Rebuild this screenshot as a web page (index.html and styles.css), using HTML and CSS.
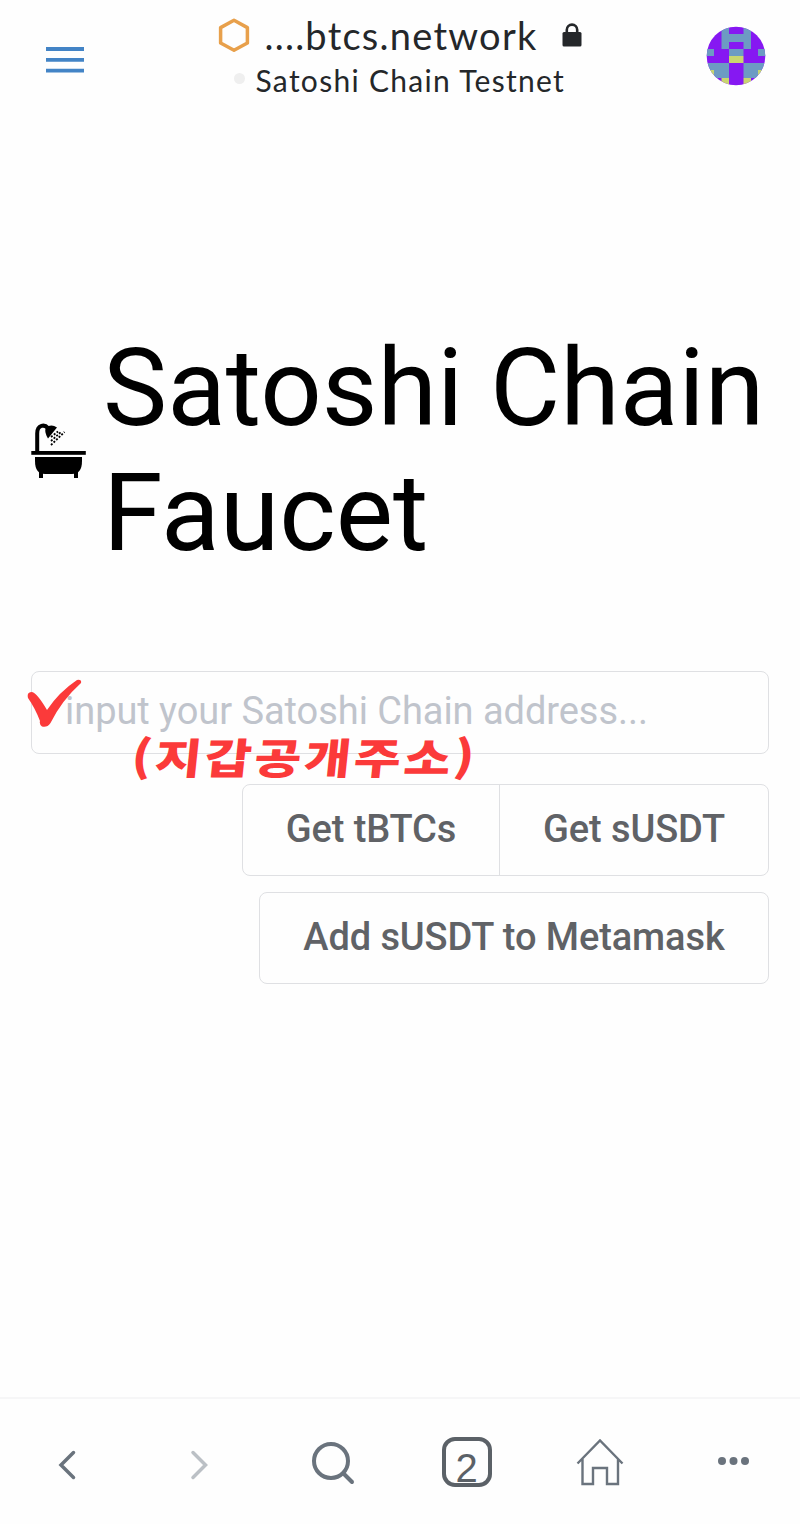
FILE: index.html
```
<!DOCTYPE html>
<html lang="en">
<head>
    <meta charset="UTF-8">
    <meta name="viewport" content="width=device-width, initial-scale=1.0">
    <title>Satoshi Chain Faucet</title>
    <link rel="stylesheet" href="styles.css">
</head>
<body>
    <header>
        <svg class="menu" viewBox="0 0 38 28" width="38" height="28">
            <path d="M0 3h38M0 13.8h38M0 24.6h38" stroke="#4384c6" stroke-width="3.8"/>
        </svg>
        <div class="site">
            <div class="site-url">
                <svg width="32" height="34" viewBox="0 0 32 34">
                    <path d="M16 2.3 29.4 9.6V25L16 32.3 2.6 25V9.6Z" fill="none" stroke="#e8a04b" stroke-width="3.5" stroke-linejoin="round"/>
                </svg>
                <span class="url">....btcs.network</span>
                <svg class="lock" width="20" height="24" viewBox="0 0 20 24">
                    <path d="M4.800 10V6.800a5.200 5.200 0 0 1 10.400 0V10" fill="none" stroke="#24272a" stroke-width="2.600"/>
                    <rect x="0.500" y="9" width="19" height="14.500" rx="1.500" fill="#24272a"/>
                </svg>
            </div>
            <div class="network"><i class="dot"></i><span class="network-name">Satoshi Chain Testnet</span></div>
        </div>
        <svg class="avatar" width="60" height="60" viewBox="0 0 60 60">
            <clipPath id="round"><circle cx="30" cy="30" r="29.300"/></clipPath>
            <g clip-path="url(#round)">
                <rect width="60" height="60" fill="#8618f2"/>
                <path d="M15.500 0H23V8H37.500V0H45V23H37.500V16H23V23H15.500ZM23 23H37.500V30H23ZM0 23H8V30H0ZM52 23H60V30H52ZM0 37H23V52H0ZM37.500 37H60V52H37.500Z" fill="#6d9bc3"/>
                <path d="M23 30H37.500V37H23ZM0 44H8V52H0ZM52 44H60V52H52ZM15.500 52H23V60H15.500ZM37.500 52H45V60H37.500Z" fill="#c9d670"/>
            </g>
        </svg>
    </header>

    <main>
        <div class="title">
            <svg width="56" height="56" viewBox="0 0 56 56">
                <path d="M6.200 28V10.500C6.200 1 14 1.500 17 5" fill="none" stroke="#000" stroke-width="4"/>
                <path d="M14.500 5Q20 0.500 26 4.500L17 15.500Q13.500 10 14.500 5Z"/>
                <path d="M20 22 33.500 9M20 18 30 9M20 14 27 8.500" stroke="#000" stroke-width="1.800" stroke-dasharray="2 1.600"/>
                <rect x="0.300" y="28" width="54.500" height="3.800"/>
                <path d="M4 34H51V38Q51 51 41 51H14Q4 51 4 38Z"/>
                <path d="M8 47h4v8H8zM43 47h4v8h-4z"/>
            </svg>
            <h1>Satoshi Chain Faucet</h1>
        </div>

        <div class="address">
            <input type="text" placeholder="input your Satoshi Chain address...">
            <svg class="check" width="56" height="50" viewBox="0 0 56 50">
                <path d="M1 19Q-0.500 13 5 13 10 14 20 31 32 13 50 1 55 0 54 4 35 21 23.500 44 20 49 15 47.500 12 45 13 42 8 29 1 19Z" fill="#fb3a3a"/>
            </svg>
            <span class="note" lang="ko">(지갑공개주소)</span>
        </div>

        <div class="buttons">
            <div class="group">
                <button>Get tBTCs</button>
                <button>Get sUSDT</button>
            </div>
            <div class="group">
                <button class="wide">Add sUSDT to Metamask</button>
            </div>
        </div>
    </main>

    <nav>
        <svg width="50" height="50" viewBox="0 0 50 50" fill="none" stroke="#6a737d" stroke-width="3.500" stroke-linecap="round">
            <path d="M31.500 15.500 19 28 31.500 40.500"/>
        </svg>
        <svg width="50" height="50" viewBox="0 0 50 50" fill="none" stroke="#bbc0c5" stroke-width="3.500" stroke-linecap="round">
            <path d="M18 15.500 30.500 28 18 40.500"/>
        </svg>
        <svg width="50" height="50" viewBox="0 0 50 50" fill="none" stroke="#6a737d" stroke-width="4" stroke-linecap="round">
            <circle cx="23" cy="24" r="17"/>
            <path d="M36 37 44 45"/>
        </svg>
        <div class="tabs">2</div>
        <svg width="50" height="50" viewBox="0 0 50 50" fill="none" stroke="#6a737d" stroke-width="2.400">
            <path d="M2.500 26.500 25 3.500 47.500 26.500M7.500 22V47H18V31H32V47H43V22"/>
        </svg>
        <svg width="50" height="50" viewBox="0 0 50 50" fill="#6a737d">
            <circle cx="14" cy="24" r="4"/>
            <circle cx="25.500" cy="24" r="4"/>
            <circle cx="37" cy="24" r="4"/>
        </svg>
    </nav>
</body>
</html>
```
FILE: styles.css
```
* {
    box-sizing: border-box;
}
body {
    margin: 0;
    height: 1524px;
    display: flex;
    flex-direction: column;
    background: #fefefe;
    font-family: Roboto, sans-serif;
}
header {
    display: flex;
    justify-content: space-between;
    align-items: flex-start;
    height: 112px;
    padding: 15px 34px 0 46px;
    font-family: Lato, sans-serif;
    color: #24272a;
}
.menu {
    margin-top: 31px;
}
.avatar {
    margin-top: 11px;
}
.site {
    margin-left: 9px;
}
.site-url {
    display: flex;
    align-items: center;
    height: 40px;
}
.url {
    width: 277px;
    margin: 0 20px 0 15px;
    font-size: 38px;
    letter-spacing: 1.25px;
    white-space: nowrap;
}
.lock {
    margin-bottom: 1px;
}
.network {
    display: flex;
    align-items: center;
    height: 50px;
    padding-left: 16px;
    font-size: 30px;
    letter-spacing: 1.3px;
    white-space: nowrap;
}
.dot {
    width: 11px;
    height: 11px;
    margin: -4px 11px 0 0;
    border-radius: 50%;
    background: #efefef;
}
main {
    flex: 1;
    padding: 213px 31px 0;
}
.title {
    display: flex;
    align-items: center;
    height: 252px;
}
.title svg {
    margin-right: 16px;
    flex: none;
}
h1 {
    margin: 0 -20px 0 0;
    font-size: 108px;
    font-weight: 400;
    line-height: 125px;
    color: #000;
}
.address {
    position: relative;
    margin-top: 94px;
}
input {
    display: block;
    width: 738px;
    height: 83px;
    padding: 0 33px 3px;
    border: 1.500px solid #dfe0e3;
    border-radius: 8px;
    background: transparent;
    font-family: Roboto, sans-serif;
    font-size: 38px;
    letter-spacing: -0.05px;
}
input::placeholder {
    color: #c0c4cc;
    opacity: 1;
}
.check {
    position: absolute;
    left: -4px;
    top: 8px;
}
/* handwritten note over the edge of the field */
.note {
    position: absolute;
    left: 101px;
    top: 57px;
    font-family: "Noto Sans CJK KR", sans-serif;
    font-size: 42px;
    font-weight: 900;
    line-height: 56px;
    letter-spacing: 2.5px;
    color: #fb3a3a;
    white-space: nowrap;
    transform: scaleX(1.21) skewX(-5deg);
    transform-origin: left center;
}
.buttons {
    display: flex;
    flex-direction: column;
    align-items: flex-end;
    gap: 16px;
    margin-top: 30px;
}
.group {
    display: flex;
    border: 1px solid #dfe0e3;
    border-radius: 8px;
}
button {
    width: 256px;
    height: 90px;
    padding: 0 0 3px;
    border: none;
    background: none;
    font-family: Roboto, sans-serif;
    font-size: 38px;
    font-weight: 500;
    letter-spacing: -0.1px;
    color: #606266;
    white-space: nowrap;
}
button + button {
    width: 269px;
    border-left: 1px solid #dfe0e3;
}
button.wide {
    width: 508px;
}
nav {
    display: flex;
    justify-content: space-between;
    height: 127px;
    padding: 38px 42px 0;
    border-top: 2px solid #f6f6f7;
}
.tabs {
    width: 50px;
    height: 50px;
    border: 4px solid #5b6167;
    border-radius: 13px;
    font-family: "Liberation Sans", sans-serif;
    font-size: 40px;
    line-height: 55px;
    text-align: center;
    color: #5b6167;
}
```
